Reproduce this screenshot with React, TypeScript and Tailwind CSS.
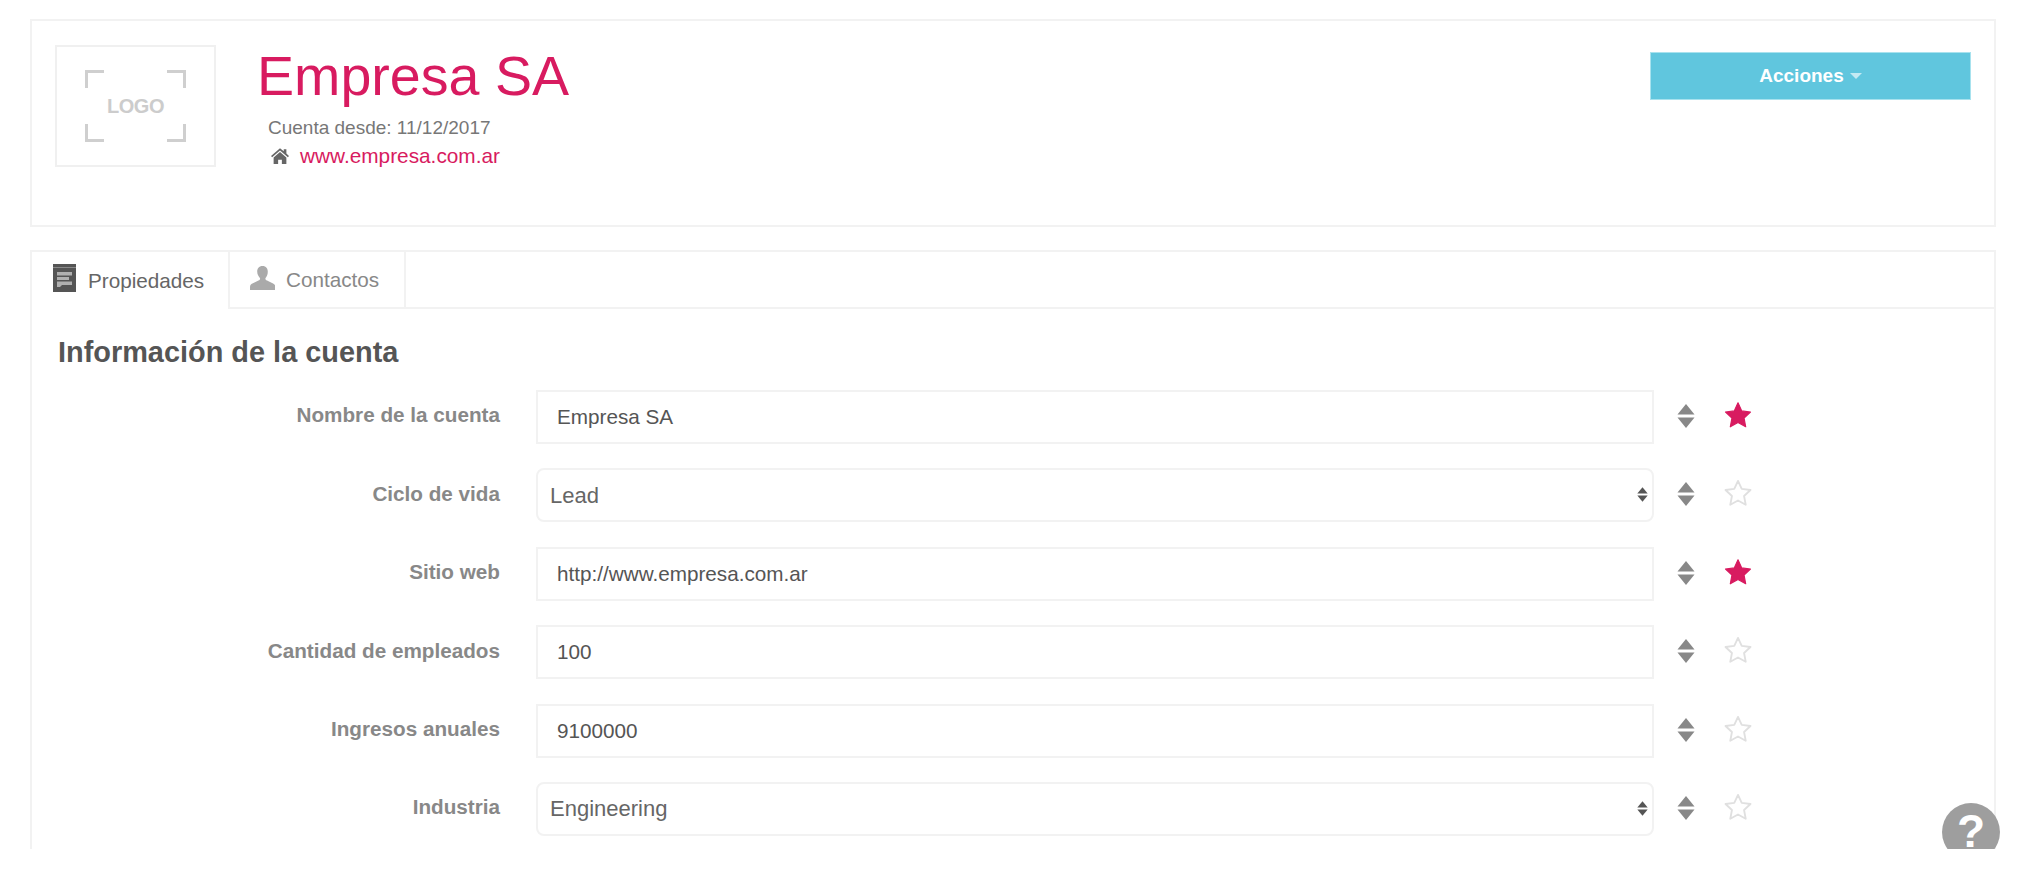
const font = { fontFamily: '"Liberation Sans", Arial, sans-serif' }

type Row = { label: string; value: string; kind: 'input' | 'select'; starred: boolean }

const rows: Row[] = [
  { label: 'Nombre de la cuenta', value: 'Empresa SA', kind: 'input', starred: true },
  { label: 'Ciclo de vida', value: 'Lead', kind: 'select', starred: false },
  { label: 'Sitio web', value: 'http://www.empresa.com.ar', kind: 'input', starred: true },
  { label: 'Cantidad de empleados', value: '100', kind: 'input', starred: false },
  { label: 'Ingresos anuales', value: '9100000', kind: 'input', starred: false },
  { label: 'Industria', value: 'Engineering', kind: 'select', starred: false },
]

const STAR = 'M12 1.6l3.2 6.9 7.5.9-5.5 5.2 1.4 7.5L12 18.4l-6.6 3.7 1.4-7.5L1.3 9.4l7.5-.9z'

function Star({ filled }: { filled: boolean }) {
  return (
    <svg width="28" height="28" viewBox="0 0 24 24" className="block shrink-0">
      <path
        d={STAR}
        fill={filled ? '#d81b60' : 'none'}
        stroke={filled ? '#d81b60' : '#e0e0e0'}
        strokeWidth={filled ? 1 : 1.6}
        strokeLinejoin="round"
      />
    </svg>
  )
}

function SortArrows({ width, height, color }: { width: number; height: number; color: string }) {
  return (
    <svg width={width} height={height} viewBox="0 0 18 24" className="block shrink-0">
      <path d="M9 0l8.500 10.500H.5z" fill={color} />
      <path d="M9 24l8.500-10.500H.5z" fill={color} />
    </svg>
  )
}

function HomeIcon() {
  return (
    <svg width="18" height="16" viewBox="0 0 24 21" className="shrink-0">
      <path d="M12 0l5 4.300V1.500h3.500v5.800L24 10.400l-1.500 1.700L12 3.100 1.500 12.100 0 10.400z" fill="#666" />
      <path d="M12 5.300l8.500 7.300V21H14.500v-5.500h-5V21H3.500v-8.400z" fill="#666" />
    </svg>
  )
}

function PropsIcon() {
  return (
    <svg width="23" height="28" viewBox="0 0 23 28" className="shrink-0 -translate-y-[3px]">
      <path d="M0 0h23v28H0z" fill="#555" />
      <path d="M0 3.500h23" stroke="#8a8a8a" strokeWidth="1" />
      <path d="M4 8h15v3.500H4zM4 13h12v3H4zM4 17.500h15v3.500H9l-2 2H4z" fill="#b0b0b0" />
    </svg>
  )
}

function UserIcon() {
  return (
    <svg width="25" height="24" viewBox="0 0 26 25" className="shrink-0 -translate-y-[2px]">
      <path
        d="M13 0c3.800 0 5.500 2.600 5.500 6 0 2.800-1 5-2.300 6.600-.5 1 0 2 1.500 2.600l6.300 3c1.500.8 2.500 1.800 2.500 3.600V25H0v-3.200c0-1.800 1-2.800 2.500-3.600l6.300-3c1.500-.6 2-1.600 1.500-2.600C9 11 7.500 8.800 7.500 6 7.500 2.600 9.200 0 13 0z"
        fill="#aaa"
      />
    </svg>
  )
}

function LogoPlaceholder() {
  return (
    <div className="flex h-[122px] w-[161px] shrink-0 items-center justify-center border-2 border-[#f0f0f0]">
      <div className="relative flex h-[72px] w-[101px] items-center justify-center">
        <span className="absolute left-0 top-0 h-[18px] w-[19px] border-l-[3px] border-t-[3px] border-[#cfcfcf]" />
        <span className="absolute right-0 top-0 h-[18px] w-[19px] border-r-[3px] border-t-[3px] border-[#cfcfcf]" />
        <span className="absolute bottom-0 left-0 h-[18px] w-[19px] border-b-[3px] border-l-[3px] border-[#cfcfcf]" />
        <span className="absolute bottom-0 right-0 h-[18px] w-[19px] border-b-[3px] border-r-[3px] border-[#cfcfcf]" />
        <span className="text-[20px] font-bold tracking-[-0.5px] text-[#cccccc]">LOGO</span>
      </div>
    </div>
  )
}

function Field({ row }: { row: Row }) {
  return (
    <div className="flex items-center">
      <label className="w-[468px] shrink-0 -translate-y-[2px] text-right text-[20.700px] font-bold text-[#888]">{row.label}</label>
      <div className="relative ml-[36px] w-[1118px] shrink-0">
        {row.kind === 'input' ? (
          <input
            readOnly
            value={row.value}
            className="block h-[54px] w-full border-2 border-[#f2f2f2] bg-white px-[19px] text-[20.700px] text-[#555] outline-none"
          />
        ) : (
          <>
            <select
              defaultValue={row.value}
              className="block h-[54px] w-full appearance-none rounded-[8px] border-2 border-[#f2f2f2] bg-white px-[12px] text-[22px] text-[#666] outline-none"
            >
              <option>{row.value}</option>
            </select>
            <span className="absolute right-[6px] top-[16px]">
              <SortArrows width={11} height={21} color="#555" />
            </span>
          </>
        )}
      </div>
      <span className="ml-[23px] -translate-y-[1px]">
        <SortArrows width={18} height={24} color="#888" />
      </span>
      <span className="ml-[29px] -translate-y-[2px]">
        <Star filled={row.starred} />
      </span>
    </div>
  )
}

export default function App() {
  return (
    <div className="h-[872px] bg-white" style={font}>
      <div className="relative h-[849px] overflow-hidden px-[30px] pt-[19px]">
        <div className="flex h-[208px] items-start border-2 border-[#f2f2f2] pl-[23px] pt-[24px]">
          <LogoPlaceholder />
          <div className="ml-[41px] -mt-[1px] grow">
            <h1 className="text-[55.600px] leading-[64px] text-[#d81b60]">Empresa SA</h1>
            <p className="ml-[11px] mt-[9px] text-[19px] leading-[22px] text-[#777]">Cuenta desde: 11/12/2017</p>
            <div className="ml-[14px] mt-[6px] flex items-center gap-[11px]">
              <HomeIcon />
              <a className="text-[20.800px] leading-[22px] text-[#d81b60]">www.empresa.com.ar</a>
            </div>
          </div>
          <button className="mr-[23px] mt-[7px] flex h-[48px] w-[321px] shrink-0 items-center justify-center gap-[6px] border border-[#a8e2ee] bg-[#60c6de] text-[19px] font-bold text-white">
            Acciones
            <svg width="12" height="6" viewBox="0 0 12 6"><path d="M0 0h12L6 6z" fill="#c4eaf3" /></svg>
          </button>
        </div>

        <div className="mt-[23px] h-[641px] border-2 border-[#f2f2f2]">
          <div className="flex h-[57px] border-b-2 border-[#f2f2f2]">
            <div className="-mb-[2px] flex w-[198px] items-center gap-[12px] border-r-2 border-[#f2f2f2] bg-white pl-[21px]">
              <PropsIcon />
              <span className="text-[20.700px] text-[#666]">Propiedades</span>
            </div>
            <div className="flex w-[176px] items-center gap-[11px] border-r-2 border-[#f2f2f2] pl-[20px]">
              <UserIcon />
              <span className="text-[20.700px] text-[#888]">Contactos</span>
            </div>
          </div>
          <h2 className="ml-[26px] mt-[27px] text-[28.900px] font-bold leading-[32px] text-[#555]">Información de la cuenta</h2>
          <div className="mt-[22px] flex flex-col gap-[24.400px]">
            {rows.map(row => (
              <Field key={row.label} row={row} />
            ))}
          </div>
        </div>

        <div className="absolute left-[1942px] top-[803px] flex h-[58px] w-[58px] items-center justify-center rounded-full bg-[#999]/95">
          <span className="-translate-y-[1px] text-[46px] font-bold leading-[34px] text-white">?</span>
        </div>
      </div>
    </div>
  )
}
